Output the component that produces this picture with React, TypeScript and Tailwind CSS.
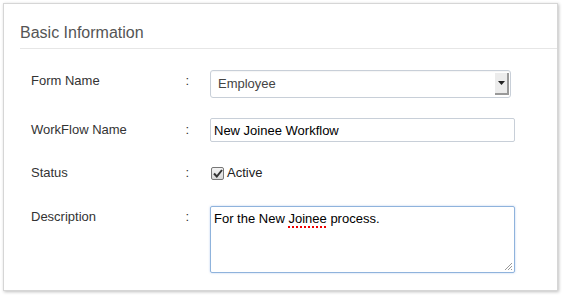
const Label = ({ text }: { text: string }) => (
  <div className="flex w-[170px] shrink-0 items-center justify-between pl-[10px] pr-[2px] text-[13px] text-[#333]">
    <span>{text}</span>
    <span>:</span>
  </div>
);

const App = () => {
  return (
    <div className="h-[296px] w-[563px] bg-white p-[3px] pr-[5px] pb-[5px] font-['Liberation_Sans',Arial,sans-serif]">
      <div className="h-[288px] w-[555px] border border-[#d6d6d6] bg-white shadow-[1px_1px_3px_rgba(0,0,0,0.25)]">
        {/* Header */}
        <div className="ml-[16px] border-b border-[#e6e6e6] pt-[19px] pb-[5px] text-[16px] leading-[20px] text-[#555]">
          Basic Information
        </div>

        <div className="pl-[17px] pt-[21px]">
          {/* Form Name */}
          <div className="flex h-[28px] items-start">
            <div className="flex h-[22px] items-center">
              <Label text="Form Name" />
            </div>
            <div className="ml-[19px] flex h-[28px] w-[301px] items-center justify-between rounded-[3px] border border-[#c8cfd8] bg-white pl-[7px] shadow-[inset_0_1px_1px_rgba(0,0,0,0.04)]">
              <span className="text-[13px] text-[#444]">Employee</span>
              <div className="mr-[1px] flex h-[22px] w-[14px] items-center justify-center border-r-2 border-b-2 border-[#999] bg-[#ececec]">
                <svg width="7" height="4" viewBox="0 0 7 4"><path d="M0 0h7L3.5 4z" fill="#222" /></svg>
              </div>
            </div>
          </div>

          {/* WorkFlow Name */}
          <div className="mt-[20px] flex h-[24px] items-center">
            <Label text="WorkFlow Name" />
            <input
              readOnly
              value="New Joinee Workflow"
              className="ml-[19px] h-[24px] w-[305px] rounded-[2px] border border-[#c8cfd8] px-[3px] text-[13px] text-black outline-none"
            />
          </div>

          {/* Status */}
          <div className="mt-[22px] flex h-[18px] items-center">
            <Label text="Status" />
            <label className="ml-[20px] flex items-center gap-[3px] text-[13px] text-[#222]">
              <span className="flex h-[13px] w-[13px] items-center justify-center rounded-[2px] border border-[#777] bg-gradient-to-b from-[#f4f4f4] to-[#d8d8d8]">
                <svg width="10" height="9" viewBox="0 0 10 9"><path d="M1 4.5l2.8 3L9 1" stroke="#333" strokeWidth="2" fill="none" /></svg>
              </span>
              Active
            </label>
          </div>

          {/* Description */}
          <div className="mt-[24px] flex items-start">
            <div className="flex h-[22px] items-center">
              <Label text="Description" />
            </div>
            <div className="relative ml-[19px] h-[67px] w-[305px] rounded-[2px] border border-[#8fb3dc] px-[3px] pt-[2px] text-[13px] text-black shadow-[0_0_2px_rgba(100,150,220,0.5)]">
              For the New{' '}
              <span className="underline decoration-[#e00] decoration-dotted decoration-2 underline-offset-[3px]">Joinee</span>{' '}
              process.
              <svg className="absolute right-[1px] bottom-[1px]" width="9" height="9" viewBox="0 0 9 9">
                <path d="M8 1L1 8M8 4L4 8M8 7L7 8" stroke="#999" strokeWidth="1" />
              </svg>
            </div>
          </div>
        </div>
      </div>
    </div>
  );
};

export default App;
